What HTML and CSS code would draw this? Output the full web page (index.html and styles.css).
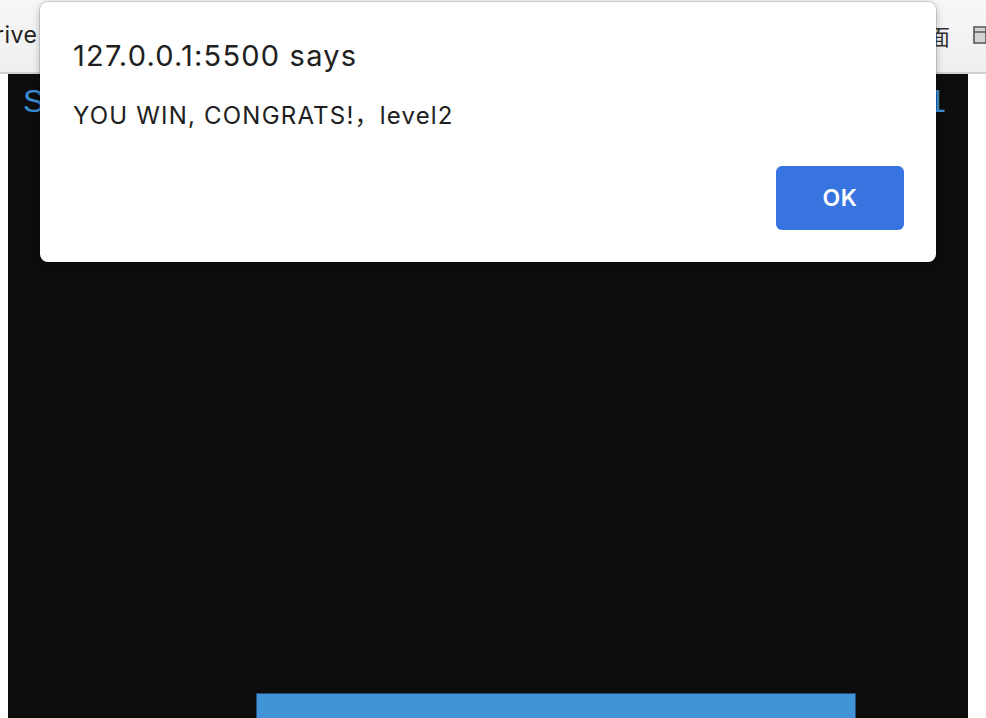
FILE: index.html
```html
<!DOCTYPE html>
<html>
<head>
<meta charset="utf-8">
<link rel="stylesheet" href="styles.css">
</head>
<body>
<div class="toolbar">
  <span class="tb-text">rive</span>
  <div class="tb-icons">
    <span class="tb-glyph">面</span>
    <svg class="tb-folder" width="20" height="24" viewBox="0 0 20 24"><path d="M2 4 H14 V20 H2 Z M2 9 H14" fill="#d4d4d4" stroke="#555" stroke-width="1.6"/></svg>
  </div>
</div>
<div class="canvas">
  <div class="hud">
    <span class="hud-item">Score: 0</span>
    <span class="hud-item">Level: 1</span>
  </div>
  <div class="play"></div>
  <div class="paddle"></div>
</div>
<div class="dialog">
  <div class="dlg-title">127.0.0.1:5500 says</div>
  <div class="dlg-msg">YOU WIN, CONGRATS!，level2</div>
  <div class="dlg-actions"><button class="dlg-ok">OK</button></div>
</div>
</body>
</html>
```
FILE: styles.css
```css
html, body { margin: 0; padding: 0; background: #ffffff; overflow: hidden; }
body { width: 986px; height: 718px; position: relative; }
.toolbar {
  height: 72px;
  border-bottom: 2px solid #d2d2d2;
  background: linear-gradient(#f7f7f7, #efefef);
  display: flex;
  align-items: center;
  justify-content: space-between;
  font-family: "Inter", "Liberation Sans", sans-serif;
}
.tb-text { font-size: 23px; color: #222; margin-left: -5px; margin-top: -2px; letter-spacing: 0.5px; }
.tb-icons { display: flex; align-items: center; gap: 22px; margin-right: -6px; margin-top: -2px; }
.tb-glyph { font-family: "Noto Sans CJK SC", sans-serif; font-size: 22px; color: #333; }
.tb-folder { display: block; }
.canvas {
  margin-left: 8px;
  width: 960px;
  height: 644px;
  background: #0d0d0d;
  display: flex;
  flex-direction: column;
}
.hud {
  display: flex;
  justify-content: space-between;
  padding: 9px 22px 0 15px;
  font-family: "Liberation Sans", Arial, sans-serif;
  font-size: 32px;
  color: #3a8fd6;
  line-height: 36px;
}
.play { flex: 1; }
.paddle {
  margin-left: 248px;
  width: 598px;
  height: 24px;
  background: #4194d8;
  border: 1px solid #23507a;
  border-bottom: none;
}
.dialog {
  position: absolute;
  left: 40px;
  top: 2px;
  width: 896px;
  height: 260px;
  box-sizing: border-box;
  background: #ffffff;
  border-radius: 8px;
  box-shadow: 0 0 0 1px rgba(0,0,0,0.12), 0 2px 8px rgba(0,0,0,0.25);
  padding: 36px 32px 0 33px;
  font-family: "Inter", "Noto Sans CJK SC", "Liberation Sans", sans-serif;
  color: #202020;
}
.dlg-title { font-size: 29px; line-height: 36px; letter-spacing: 1.2px; }
.dlg-msg { font-size: 24px; line-height: 30px; margin-top: 27px; letter-spacing: 1.2px; }
.dlg-actions { display: flex; justify-content: flex-end; margin-top: 35px; }
.dlg-ok {
  width: 128px;
  height: 64px;
  border: none;
  border-radius: 6px;
  background: #3874e0;
  color: #ffffff;
  font-family: "Inter", "Liberation Sans", sans-serif;
  font-weight: 600;
  font-size: 23px;
  letter-spacing: 0.5px;
}
```
